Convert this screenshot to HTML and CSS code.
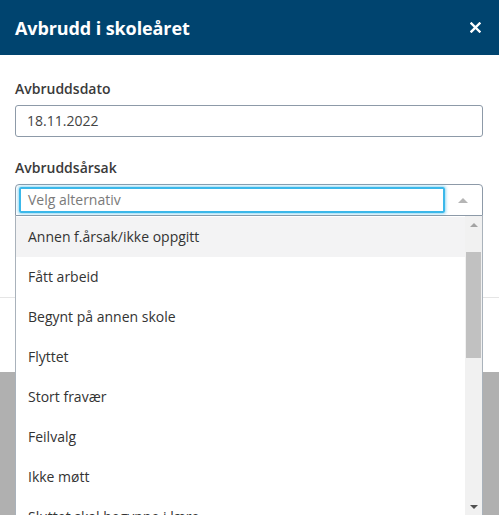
FILE: index.html
```html
<!DOCTYPE html>
<html lang="no">
<head>
<meta charset="utf-8">
<title>Avbrudd i skoleåret</title>
<link rel="stylesheet" href="styles.css">
</head>
<body>
<div class="modal">
  <div class="modal-header">
    <h1 class="modal-title">Avbrudd i skoleåret</h1>
    <button class="close" aria-label="Lukk">
      <svg width="11" height="11" viewBox="0 0 11 11"><path d="M1.5 1.5 L9.5 9.5 M9.5 1.5 L1.5 9.5" stroke="#fff" stroke-width="2.4" stroke-linecap="square"/></svg>
    </button>
  </div>
  <div class="modal-body">
    <div class="field">
      <label class="label">Avbruddsdato</label>
      <div class="input">18.11.2022</div>
    </div>
    <div class="field">
      <label class="label">Avbruddsårsak</label>
      <div class="select">
        <div class="search">Velg alternativ</div>
        <span class="caret"></span>
        <div class="dropdown">
          <ul class="options">
            <li class="option active">Annen f.årsak/ikke oppgitt</li>
            <li class="option">Fått arbeid</li>
            <li class="option">Begynt på annen skole</li>
            <li class="option">Flyttet</li>
            <li class="option">Stort fravær</li>
            <li class="option">Feilvalg</li>
            <li class="option">Ikke møtt</li>
            <li class="option">Sluttet skal begynne i lære</li>
          </ul>
          <div class="scrollbar">
            <span class="sb-btn"><span class="tri-up"></span></span>
            <span class="sb-gap"></span>
            <span class="sb-thumb"></span>
            <span class="sb-track"></span>
            <span class="sb-btn"><span class="tri-down"></span></span>
          </div>
        </div>
      </div>
    </div>
  </div>
  <div class="modal-footer"></div>
</div>
</body>
</html>
```
FILE: styles.css
```css
* { box-sizing: border-box; }
html, body { margin: 0; padding: 0; }
body {
  background: #b0b0b0;
  font-family: "Open Sans", "Noto Sans", sans-serif;
  color: #333;
  height: 515px;
  overflow: hidden;
}
.modal {
  width: 499px;
  background: #fff;
}
.modal-header {
  height: 55px;
  background: #00446f;
  display: flex;
  align-items: center;
  justify-content: space-between;
  padding: 0 18px 0 15px;
}
.modal-title {
  margin: 0;
  color: #fff;
  font-size: 18px;
  font-weight: 700;
  line-height: 24px;
  letter-spacing: -0.1px;
}
.close {
  background: none;
  border: 0;
  padding: 0;
  width: 11px;
  height: 11px;
  display: flex;
}
.modal-body {
  padding: 24px 16px 0 15px;
  height: 243px;
  border-bottom: 1px solid #e5e5e5;
}
.field { margin-bottom: 21px; }
.label {
  display: block;
  font-size: 14px;
  line-height: 20px;
  font-weight: 600;
  color: #3a3a3a;
  margin-bottom: 6px;
}
.input {
  height: 32px;
  border: 1px solid #8d9aa8;
  border-radius: 3px;
  padding: 0 11px;
  font-size: 14px;
  line-height: 30px;
  color: #444;
}
.select {
  position: relative;
  height: 32px;
  border: 1px solid #8d9aa8;
  border-radius: 4px 4px 0 0;
  padding: 2px 37px 2px 3px;
  margin-top: 5px;
}
.search {
  height: 26px;
  border: 2px solid #3bb8ea;
  box-shadow: 0 0 3px 1px rgba(59, 184, 234, 0.55);
  border-radius: 2px;
  padding: 0 7px;
  font-size: 14px;
  line-height: 22px;
  color: #7a7a7a;
}
.caret {
  position: absolute;
  right: 14px;
  top: 13px;
  width: 0; height: 0;
  border-left: 5px solid transparent;
  border-right: 5px solid transparent;
  border-bottom: 5px solid #b5b5b5;
}
.dropdown {
  position: absolute;
  left: -1px;
  right: -1px;
  top: 31px;
  height: 300px;
  background: #fff;
  border: 1px solid #a9b2bb;
  border-top: 0;
  display: flex;
  overflow: hidden;
}
.options {
  list-style: none;
  margin: 0;
  padding: 1px 0 0 0;
  flex: 1;
}
.option {
  height: 40px;
  line-height: 40px;
  padding: 0 12px;
  font-size: 14px;
  color: #333;
  white-space: nowrap;
}
.option.active { background: #f3f3f4; }
.scrollbar {
  width: 17px;
  background: #f1f1f1;
  display: flex;
  flex-direction: column;
  align-items: center;
}
.sb-btn {
  height: 17px;
  width: 17px;
  display: flex;
  align-items: center;
  justify-content: center;
}
.sb-gap { height: 19px; }
.sb-thumb {
  width: 15px;
  height: 106px;
  background: #c1c1c1;
}
.sb-track { flex: 1; }
.tri-up, .tri-down {
  width: 0; height: 0;
  border-left: 4px solid transparent;
  border-right: 4px solid transparent;
}
.tri-up { border-bottom: 4px solid #a3a3a3; }
.tri-down { border-top: 4px solid #505050; }
.modal-footer { height: 74px; }
```
